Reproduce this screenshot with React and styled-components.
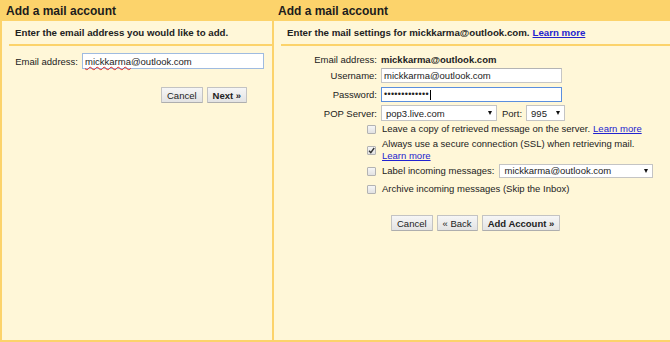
import React from "react";
import styled, { createGlobalStyle } from "styled-components";

const gold = "#fcd36b";
const cream = "#fff7d8";
const ink = "#222";
const link = "#2323cf";

const GlobalStyle = createGlobalStyle`
  html, body {
    margin: 0;
    padding: 0;
    background: ${cream};
  }
  body {
    font-family: "Liberation Sans", Arial, sans-serif;
    font-size: 9.5px;
    color: ${ink};
  }
`;

const Page = styled.div`
  display: flex;
  height: 342px;
  box-sizing: border-box;
  border-bottom: 2px solid ${gold};
  background: ${cream};
`;

const Panel = styled.section`
  display: flex;
  flex-direction: column;
  box-sizing: border-box;
  border-left: 2px solid ${gold};
  width: ${(props) => (props.$width ? `${props.$width}px` : "auto")};
  flex: ${(props) => (props.$width ? "none" : 1)};
`;

const Header = styled.h2`
  margin: 0;
  height: 21px;
  line-height: 22px;
  padding-left: 4px;
  background: ${gold};
  font-size: 12px;
  font-weight: bold;
  color: #1c1c1c;
`;

const SubHeader = styled.div`
  display: flex;
  align-items: center;
  height: 23px;
  margin-left: 7px;
  padding-left: 6px;
  border-bottom: 2px solid ${gold};
  font-size: 9.7px;
  font-weight: bold;
  white-space: nowrap;
`;

const Link = styled.a`
  color: ${link};
  text-decoration: underline;
  cursor: pointer;
  margin-left: 3px;
`;

const FieldRow = styled.div`
  display: flex;
  align-items: center;
  height: ${(props) => props.$height || 15}px;
  margin-top: ${(props) => props.$top || 0}px;
  padding-left: ${(props) => props.$indent || 0}px;
`;

const Label = styled.span`
  width: ${(props) => props.$width}px;
  margin-right: 4px;
  text-align: right;
  white-space: nowrap;
  flex: none;
`;

const Value = styled.span`
  font-weight: bold;
`;

const Field = styled.div`
  display: flex;
  align-items: center;
  box-sizing: border-box;
  width: ${(props) => props.$width}px;
  height: ${(props) => props.$height || 15}px;
  padding-left: 2px;
  background: #fff;
  border: 1px solid ${(props) => (props.$focus ? props.$focus : "#c6c6c6")};
  border-top-color: ${(props) => (props.$focus ? props.$focus : "#b4b4b4")};
  white-space: nowrap;
`;

const Misspelled = styled.span`
  text-decoration: underline wavy #e02020;
  text-decoration-thickness: 1px;
  text-underline-offset: 1px;
`;

const Dots = styled.span`
  letter-spacing: 0.3px;
  font-size: 9px;
  line-height: 1;
`;

const Caret = styled.span`
  display: inline-block;
  width: 1px;
  height: 10px;
  margin-left: 1px;
  background: #000;
`;

const Select = styled.div`
  display: flex;
  align-items: center;
  justify-content: space-between;
  box-sizing: border-box;
  width: ${(props) => props.$width}px;
  height: ${(props) => props.$height || 16}px;
  padding: 0 4px 0 4px;
  margin-left: ${(props) => props.$gap || 0}px;
  background: #fff;
  border: 1px solid #c4c4c4;
  white-space: nowrap;
`;

const Arrow = styled.span`
  width: 0;
  height: 0;
  border-style: solid;
  border-width: 4px 2.5px 0 2.5px;
  border-color: #111 transparent transparent transparent;
`;

const PortLabel = styled.span`
  margin: 0 4px 0 5px;
`;

const CheckRow = styled.div`
  display: flex;
  align-items: center;
  min-height: ${(props) => props.$height || 12}px;
  margin-top: ${(props) => props.$top || 0}px;
  padding-left: 93px;
  line-height: 12px;
`;

const Box = styled.span`
  display: flex;
  align-items: center;
  justify-content: center;
  flex: none;
  box-sizing: border-box;
  width: 9px;
  height: 9px;
  margin-right: 6px;
  border: 1px solid #b3b3b3;
  border-radius: 1px;
  background: linear-gradient(#f6f6f6, #e2e2e2);
`;

const CheckText = styled.span`
  display: flex;
  align-items: center;
  white-space: nowrap;

  ${Link} {
    margin-left: ${(props) => (props.$stacked ? 0 : 3)}px;
  }
`;

const Stack = styled.span`
  display: flex;
  flex-direction: column;
`;

const ButtonRow = styled.div`
  display: flex;
  gap: 4px;
  margin-top: ${(props) => props.$top}px;
  padding-left: ${(props) => props.$indent}px;
`;

const Button = styled.button`
  box-sizing: border-box;
  height: 16px;
  padding: 0 5px;
  font-family: inherit;
  font-size: 9.5px;
  font-weight: ${(props) => (props.$primary ? "bold" : "normal")};
  color: ${ink};
  background: linear-gradient(#f6f6f6, #e3e3e3);
  border: 1px solid #c3c3c3;
  border-bottom-color: #aeaeae;
  border-radius: 1px;
  cursor: pointer;
`;

const Checkbox = ({ checked }) => (
  <Box>
    {checked && (
      <svg width="7" height="7" viewBox="0 0 7 7">
        <polyline
          points="1,3.8 2.8,5.6 6.2,1"
          fill="none"
          stroke="#333"
          strokeWidth="1.4"
        />
      </svg>
    )}
  </Box>
);

const App = () => (
  <>
    <GlobalStyle />
    <Page>
      <Panel $width={272}>
        <Header>Add a mail account</Header>
        <SubHeader>Enter the email address you would like to add.</SubHeader>
        <FieldRow $top={7} $height={16} $indent={12}>
          <Label $width={64}>Email address:</Label>
          <Field $width={182} $height={16} $focus="#9fbbe0">
            <Misspelled>mickkarma</Misspelled>@outlook.com
          </Field>
        </FieldRow>
        <ButtonRow $top={18} $indent={159}>
          <Button>Cancel</Button>
          <Button $primary>Next »</Button>
        </ButtonRow>
      </Panel>

      <Panel>
        <Header>Add a mail account</Header>
        <SubHeader>
          Enter the mail settings for mickkarma@outlook.com.
          <Link>Learn more</Link>
        </SubHeader>

        <FieldRow $top={6}>
          <Label $width={103}>Email address:</Label>
          <Value>mickkarma@outlook.com</Value>
        </FieldRow>
        <FieldRow $top={1}>
          <Label $width={103}>Username:</Label>
          <Field $width={181}>mickkarma@outlook.com</Field>
        </FieldRow>
        <FieldRow $top={4}>
          <Label $width={103}>Password:</Label>
          <Field $width={181} $focus="#5b8fde">
            <Dots>•••••••••••••</Dots>
            <Caret />
          </Field>
        </FieldRow>
        <FieldRow $top={3} $height={16}>
          <Label $width={103}>POP Server:</Label>
          <Select $width={116}>
            pop3.live.com
            <Arrow />
          </Select>
          <PortLabel>Port:</PortLabel>
          <Select $width={39}>
            995
            <Arrow />
          </Select>
        </FieldRow>

        <CheckRow $top={2}>
          <Checkbox />
          <CheckText>
            Leave a copy of retrieved message on the server.
            <Link>Learn more</Link>
          </CheckText>
        </CheckRow>
        <CheckRow $top={3}>
          <Checkbox checked />
          <CheckText $stacked>
            <Stack>
              <span>Always use a secure connection (SSL) when retrieving mail.</span>
              <span>
                <Link>Learn more</Link>
              </span>
            </Stack>
          </CheckText>
        </CheckRow>
        <CheckRow $top={2} $height={14}>
          <Checkbox />
          <CheckText>
            Label incoming messages:
            <Select $width={154} $height={14} $gap={5}>
              mickkarma@outlook.com
              <Arrow />
            </Select>
          </CheckText>
        </CheckRow>
        <CheckRow $top={5}>
          <Checkbox />
          <CheckText>Archive incoming messages (Skip the Inbox)</CheckText>
        </CheckRow>

        <ButtonRow $top={20} $indent={117}>
          <Button>Cancel</Button>
          <Button>« Back</Button>
          <Button $primary>Add Account »</Button>
        </ButtonRow>
      </Panel>
    </Page>
  </>
);

export default App;
